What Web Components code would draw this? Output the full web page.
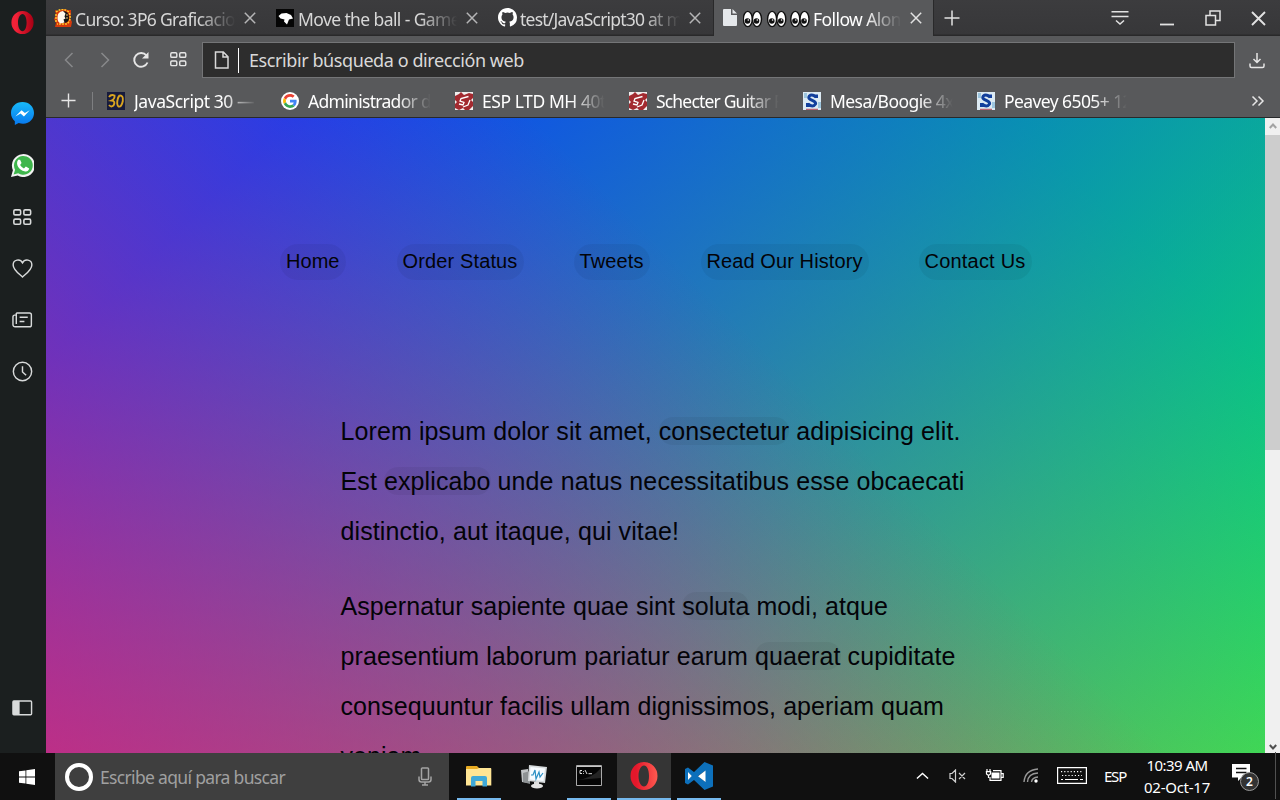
<!DOCTYPE html>
<html lang="es">
<head>
<meta charset="utf-8">
<title>Follow Along Nav</title>
<style>
html,body{margin:0;height:100%;overflow:hidden;background:#101010}
body{font-family:"Noto Sans","Open Sans",sans-serif}
</style>
</head>
<body>
<desk-top></desk-top>
<script>
const define = (name, html, setup) => customElements.define(name, class extends HTMLElement {
  connectedCallback() {
    if (this.shadowRoot) return;
    this.attachShadow({ mode: 'open' }).innerHTML = typeof html === 'function' ? html(this) : html;
    if (setup) setup(this);
  }
});

/* Text whose tracking is adjusted so that it fills the given width. */
define('fit-text', h => `<style>:host{display:inline-block;white-space:nowrap;width:${h.getAttribute('w')}px}span{display:inline-block;white-space:pre}</style><span><slot></slot></span>`, h => {
  const s = h.shadowRoot.querySelector('span');
  const d = +h.getAttribute('w') - s.getBoundingClientRect().width;
  s.style.letterSpacing = (d / h.textContent.length).toFixed(4) + 'px';
});

const O = 'fill="none" stroke="currentColor" stroke-width="1.5"';
const opera = (id, a, b) => `<linearGradient id="${id}" x1="0" x2="1"><stop offset=".2" stop-color="${a}"/><stop offset="1" stop-color="${b}"/></linearGradient><path fill="url(#${id})" fill-rule="evenodd" d="M14 0A13.5 14 0 1 0 14 28A13.5 14 0 1 0 14 0ZM14 3.5C17 3.5 19 8 19 14S17 24.500 14 24.500S8.500 20 8.500 14S11 3.500 14 3.500Z"/>`;
const eye = x => `<g transform="translate(${x} 0)"><ellipse cx="4.800" cy="9" rx="4.500" ry="7.600" fill="#fff" stroke="#111" stroke-width="1.400"/><ellipse cx="14" cy="9" rx="4.500" ry="7.600" fill="#fff" stroke="#111" stroke-width="1.400"/><circle cx="4.500" cy="11" r="2.800" fill="#111"/><circle cx="13.500" cy="11" r="2.800" fill="#111"/><circle cx="5.300" cy="10" r=".8" fill="#fff"/><circle cx="14.300" cy="10" r=".8" fill="#fff"/></g>`;
const shop = '<path fill="#f1eeee" d="M0 0h18v18H0z"/><path fill="#a32a30" d="M0 4L4 2L6 0L9 3L14 1L18 2V6L16 8L18 10V14L14 18H10L8 16L4 18L0 16V12L2 10L0 8Z"/><path d="M13.500 4.500L6 6.500L5 9L9 10.500L8 13L4 12M15 8L13 13L8 15" fill="none" stroke="#fff" stroke-width="1.300"/>';
const sweet = '<path fill="#dceaf3" d="M0 0h18v18H0z"/><path d="M1 1h3v5H1zM15 10h3v6h-3z" fill="#9cc5de"/><path d="M13.500 2.500V6M13 5Q9 1.500 6.300 4C3.500 8.500 14 8 12.500 12Q10 16 5 12M4.500 11v4" fill="none" stroke="#123f9c" stroke-width="3"/><path d="M3 17.300h12" stroke="#b34452"/>';
const icons = {
  opera: [28, 28, opera('o1', '#f32238', '#a70014')],
  operaBig: [28, 28, opera('o2', '#e3172b', '#ff5a50')],
  messenger: [24, 24, '<linearGradient id="m" x2="0" y2="1"><stop stop-color="#18b9f8"/><stop offset="1" stop-color="#0878f0"/></linearGradient><path fill="url(#m)" d="M12 0C5 0 0 5 0 11.500C0 15 1.500 18 4 20v4l4-2C18 25 24 18 24 11.500C24 5 19 0 12 0Z"/><path fill="#fff" d="M4.500 15L11 8.500L14.500 11.500L19.500 8.500L13.500 15L10 12Z"/>'],
  whatsapp: [24, 24, '<path fill="#f2f2f2" d="M0 24L2 17A12 12 0 1 1 7 22.500Z"/><path fill="#3fb64c" d="M2.700 21.300L4.300 16.500A9.800 9.800 0 1 1 7.500 20Z"/><path fill="#fff" d="M7.500 6L9.500 6L11 9.500L9.500 11.500Q11 14 13.500 15L15.500 13L19 15Q18 19 14 18C9 17 4 11 7.500 6Z"/>'],
  speed: [18, 16, `<g ${O}><rect x=".8" y=".8" width="6.400" height="4.800" rx="1.200"/><rect x="10.300" y=".8" width="6.400" height="4.800" rx="1.200"/><rect x=".8" y="9.600" width="6.400" height="4.800" rx="1.200"/><rect x="10.300" y="9.600" width="6.400" height="4.800" rx="1.200"/></g>`],
  heart: [22, 20, `<path ${O} d="M11 18.800C8 16 1.200 11.500 1.200 6.200C1.200 .5 8.500-.8 11 4C13.500-.8 20.800 .5 20.800 6.200C20.800 11.500 14 16 11 18.800Z"/>`],
  news: [22, 17, `<path ${O} d="M4.500 1h13.800a2 2 0 0 1 2 2v10.500a2 2 0 0 1-2 2H3.300A2.200 2.200 0 0 1 1 13.300V5q0-2 3-2M4.500 1v11.500M8 5.500h8.500M8 10h5"/>`],
  clock: [22, 22, `<g ${O}><circle cx="11" cy="11" r="9.600"/><path d="M11 5.500V11.500L14.800 15"/></g>`],
  panel: [22, 17, `<rect ${O} x="1" y="1" width="19.500" height="14.500" rx="1"/><path fill="currentColor" d="M1 1h7v14.500H1z"/>`],
  x: [12, 12, `<path ${O} d="M.8 .8L11.200 11.200M11.200 .8L.8 11.200"/>`],
  plus: [16, 16, `<path ${O} d="M8 .5v15M.5 8h15"/>`],
  menu: [18, 16, `<path ${O} d="M.5 1.800h17M.5 6.500h17M5 10.500l4 3.600l4-3.600"/>`],
  min: [16, 16, '<path stroke="currentColor" stroke-width="1.800" d="M1 14.500h14"/>'],
  restore: [16, 16, `<path ${O} d="M1 5.500h9.500V15H1zM5 5.500V1h10v9.500h-4.500"/>`],
  back: [10, 16, `<path ${O} d="M8.500 1L1.500 8l7 7"/>`],
  fwd: [10, 16, `<path ${O} d="M1.500 1l7 7l-7 7"/>`],
  reload: [18, 18, '<path fill="none" stroke="currentColor" stroke-width="1.900" d="M15.500 11.500A6.900 6.900 0 1 1 14.500 4.500"/><path fill="currentColor" d="M16.500 1v6.500H10Z"/>'],
  doc: [16, 18, `<path ${O} d="M1.500 1h7.800l4.700 4.800V17H1.500zM9 1v5h5"/>`],
  dl: [16, 17, `<path ${O} d="M8 1v9.500M4.500 7L8 10.500L11.500 7M1 11.500v2.500q0 1.500 1.500 1.500h11q1.500 0 1.500-1.500v-2.500"/>`],
  more: [14, 12, `<path ${O} d="M1.500 1.500L6 6l-4.500 4.500M7.500 1.500L12 6l-4.500 4.500"/>`],
  unam: [18, 18, '<path fill="#d63a0c" d="M1 1l3 1L9 0l5 1l3 0v4l-1 4l2 4l-1 5H1l1-4L0 10l2-4Z"/><path stroke="#ffc928" stroke-width="1.500" fill="none" stroke-dasharray="2 1" d="M2 3q6-5 13 0q3 7-2 12H3M2 5v9"/><path fill="#151515" d="M9 2q6 0 6 7q0 5-6 5Z"/><path fill="#fff8ed" d="M9 2Q3 3 3.500 9q0 4 3 5.500l4-1l-1-3l2-1l-1-2l1-3Z"/><path d="M12 6h2M12 9h2" stroke="#e8c070"/>'],
  ball: [18, 18, '<path fill="#050505" d="M0 0h18v18H0z"/><path fill="#fff" d="M2.500 7l3-2.500l5-.5l4.500 2l2 3.500l-4 1l-2 5l-3-3l.5-2l-4-1Z"/>'],
  github: [16, 16, '<path fill="#fff" d="M8 0C3.580 0 0 3.580 0 8c0 3.540 2.290 6.530 5.470 7.590.4.070.55-.17.55-.38 0-.19-.01-.82-.01-1.490-2.010.37-2.530-.49-2.690-.94-.09-.23-.48-.94-.82-1.130-.28-.15-.68-.52-.01-.53.63-.01 1.080.58 1.230.82.72 1.210 1.870.87 2.330.66.070-.52.28-.87.51-1.070-1.780-.2-3.640-.89-3.640-3.950 0-.87.31-1.590.82-2.150-.08-.2-.36-1.020.08-2.120 0 0 .67-.21 2.200.82a7.600 7.600 0 0 1 4 0c1.530-1.040 2.200-.82 2.200-.82.44 1.100.16 1.920.08 2.120.51.56.82 1.270.82 2.150 0 3.070-1.870 3.750-3.650 3.950.29.25.54.73.54 1.480 0 1.070-.01 1.930-.01 2.200 0 .21.15.46.55.38A8 8 0 0 0 16 8c0-4.420-3.580-8-8-8Z"/>'],
  page: [14, 17, '<path fill="#e5e8eb" d="M1 0h7v6h6v10q0 1-1 1H1q-1 0-1-1V1Q0 0 1 0ZM9.500 0L14 4.600H9.500Z"/>'],
  eyes: [68, 18, eye(0) + eye(24.3) + eye(47.5)],
  google: [48, 48, '<circle cx="24" cy="24" r="24" fill="#fff"/><g transform="translate(5.500 5.500) scale(.77)"><path fill="#EA4335" d="M24 9.500c3.540 0 6.710 1.220 9.210 3.600l6.850-6.850C35.900 2.380 30.470 0 24 0 14.620 0 6.510 5.380 2.560 13.220l7.980 6.190C12.430 13.720 17.740 9.500 24 9.500z"/><path fill="#4285F4" d="M46.980 24.550c0-1.570-.15-3.090-.38-4.550H24v9.020h12.940c-.58 2.960-2.260 5.480-4.780 7.180l7.730 6c4.510-4.180 7.090-10.360 7.090-17.650z"/><path fill="#FBBC05" d="M10.530 28.590c-.48-1.450-.76-2.990-.76-4.590s.27-3.140.76-4.590l-7.980-6.190C.92 16.460 0 20.120 0 24c0 3.880.92 7.540 2.560 10.780l7.970-6.190z"/><path fill="#34A853" d="M24 48c6.480 0 11.930-2.130 15.890-5.810l-7.730-6c-2.150 1.450-4.920 2.300-8.160 2.300-6.260 0-11.570-4.220-13.470-9.910l-7.980 6.190C6.510 42.620 14.620 48 24 48z"/></g>'],
  shop: [18, 18, shop], sweet: [18, 18, sweet],
  js30: [18, 18, '<path fill="#171b3c" d="M0 0h18v18H0z"/><path fill="none" stroke="#d9a520" stroke-width="1.900" d="M2 5Q4 2 7.500 3.500Q8 7 4.500 8.500Q9 9 6.500 13.500Q4 15.500 2 13M12.500 3.500Q16.500 3 15.800 9Q14.500 15.500 11.500 14.500Q9.500 13 10.500 8Q11 5 12.500 3.500"/>'],
  win: [16, 16, '<path fill="#fff" d="M0 2.300L6.500 1.400V7.500H0ZM7.300 1.300L16 0V7.500H7.300ZM0 8.400H6.500V14.600L0 13.700ZM7.300 8.400H16V16L7.300 14.700Z"/>'],
  mic: [14, 19, '<g fill="none" stroke="#a4a4a4" stroke-width="1.500"><rect x="3.500" y="1" width="7" height="11.500" rx=".8"/><path d="M1 9.500v3q0 2.500 2.500 2.500h7q2.500 0 2.500-2.500v-3M7 15v3M4 18h6"/></g>'],
  folder: [26, 22, '<path fill="#e8ab22" d="M0 2q0-1 1-1h10l2 2h12v5H0Z"/><path fill="#ffe594" d="M0 4h11l2-1h11.500q.8 0 .8 1v16.500H0Z"/><path fill="#3fa9d8" d="M5 21V13q0-2 2-2h12q2 0 2 2v8.500h-4.500V16h-7v5.500H5Z"/>'],
  monitor: [28, 26, '<path fill="#c1c4c6" d="M1 7l7-1v14l-6-1Z"/><path fill="#8e9294" d="M3 10l7-2v13l-7-2Z"/><path fill="#d7dbdd" d="M9 2L27 4L25 20L8 18Z"/><path fill="#f7fbff" d="M10.500 4L25 5.500L23.500 18L9.500 16.500Z"/><path d="M11 12h2l2-5l1 9l3-7l1 5l3-4" fill="none" stroke="#2a8fc4" stroke-width="1.200"/><path fill="#ddd" d="M14 19h5v3h-5z"/><ellipse cx="17" cy="23" rx="6" ry="2.400" fill="#e5e5e5"/>'],
  cmd: [26, 21, '<path fill="#050505" stroke="#aaa" d="M.5 .5h25v20H.5z"/><path fill="#c8c8c8" d="M1 1h24v1H1z"/><path fill="#242424" d="M1 15Q17 13 25 3v10Z"/><path d="M6 5.500H4v3h2M7.500 6v.8M7.500 8v.8M9 5l2 4M12.500 8.700H16" fill="none" stroke="#ddd"/>'],
  code: [28, 28, '<path fill="#0d70bb" d="M19.500 0L28 3.500V24.500L19.500 28L9 18L3 22.500L0 21V7L3 5.500L9 10ZM20 9L13 14L20 19.500ZM3 10.500V17.500L6.500 14Z"/><path fill="#fff" d="M20.500 8.500V20L13 14.200ZM3 10V18L6.800 14Z"/>'],
  up: [14, 8, `<path ${O} d="M1 7l6-5.500L13 7"/>`],
  mute: [18, 14, '<g fill="none" stroke="#cfcfcf" stroke-width="1.200"><path d="M1 4.500h2l3.500-3.500v12L3 9.500H1ZM10 4l6 6M16 4l-6 6"/></g>'],
  battery: [19, 13, '<path fill="#fff" d="M6.500 3.500h8v6h-8z"/><path fill="none" stroke="#fff" stroke-width="1.200" d="M8 1.600h8v9.800H5V8M16.500 4.600h1.700v3.800h-1.700M2 0v2M5 0v2M.8 2.600h5.500M1.500 3v2L3.500 6.500L5.500 5V3M3.500 6v3"/>'],
  wifi: [16, 15, '<g fill="none" stroke="#999" stroke-width="1.400"><path d="M1 14Q2 2 15 1M4.500 14Q5 5.500 15 5M8.500 14Q9 9.500 15 9"/></g><circle cx="13" cy="13" r="1.700" fill="#fff"/>'],
  keyboard: [30, 17, '<path fill="none" stroke="#fff" stroke-width="1.200" d="M.6 .6h28.800v15.800H.6z"/><path fill="none" stroke="#fff" stroke-width="1.200" stroke-dasharray="1.200 2" d="M4 4.700h22M5 8.500h20"/><path stroke="#fff" stroke-width="1.200" d="M4 12.500h2M8 12.500h13M23 12.500h3"/>'],
  note: [18, 17, '<path fill="#fff" d="M0 0h18v13.500H9.500L6 17V13.500H0Z"/><path d="M4 4.500h10.500M4 8.500h10.500" stroke="#111" stroke-width="1.400"/>'],
  sup: [8, 6, '<path fill="none" stroke="#a3a3a3" stroke-width="2" d="M.8 5L4 1.500L7.200 5"/>'],
  sdown: [8, 6, '<path fill="none" stroke="#505050" stroke-width="2" d="M.8 1L4 4.500L7.200 1"/>']
};
define('ui-icon', h => {
  const [vw, vh, body] = icons[h.getAttribute('n')];
  const w = h.getAttribute('w') || vw;
  return `<style>:host{display:block;flex:none;width:${w}px;height:${w * vh / vw}px}svg{display:block}</style><svg width="${w}" height="${w * vh / vw}" viewBox="0 0 ${vw} ${vh}">${body}</svg>`;
});

define('side-rail', `<style>
:host{display:flex;flex-direction:column;align-items:center;box-sizing:border-box;background:#1b1f1f;color:#d8dada;padding:11px 1px 37px 0}
ui-icon{margin-bottom:var(--g)}.end{margin-top:auto}
</style>
<ui-icon n="opera" w="23" style="--g:68px"></ui-icon>
<ui-icon n="messenger" w="23" style="--g:29px"></ui-icon>
<ui-icon n="whatsapp" w="23" style="--g:32px"></ui-icon>
<ui-icon n="speed" w="19" style="--g:33px"></ui-icon>
<ui-icon n="heart" w="21" style="--g:34px"></ui-icon>
<ui-icon n="news" w="21" style="--g:33px"></ui-icon>
<ui-icon n="clock" w="21"></ui-icon>
<ui-icon class="end" n="panel" w="21"></ui-icon>`);

define('tab-item', `<style>
:host{display:flex;align-items:center;box-sizing:border-box;height:35px;padding:0 0 0 9px;color:#d7d7d7;font-size:17.500px;border-right:1px solid transparent}
.t{flex:none;width:162px;margin-left:3px;overflow:hidden;display:flex;align-items:center;line-height:26px;padding-top:2px;-webkit-mask:linear-gradient(90deg,#000 76%,transparent 99%)}
.sep{width:1px;height:18px;background:#5d5d60;margin-left:11px}
.x{margin-left:7px;color:#b5b5b6}
:host([active]){background:#58595b;color:#fff;height:36px;border-left:1px solid #29292a;border-right-color:#29292a}
:host([active]) .sep{display:none}:host([active]) .x{color:#e2e2e2}
:host([active]) .t{margin-left:6px;width:160px}
:host([last]) .sep{display:none}
</style><slot name="icon"></slot><div class="t"><slot></slot></div><ui-icon class="x" n="x" w="12"></ui-icon><div class="sep"></div>`);

define('tab-strip', `<style>
:host{display:flex;height:36px;background:linear-gradient(#3c3c3e,#373739 34px,#29292a 35px)}
tab-item{flex:none;width:222px}
.win{margin-left:auto;display:flex;align-items:center;gap:30px;padding-right:14px;color:#e2e2e2}
.new{margin:10px 0 0 10px;color:#e2e2e2}
</style>
<tab-item style="padding-left:8px;width:221px;margin-right:1px"><ui-icon slot="icon" n="unam" w="18"></ui-icon><fit-text w="160">Curso: 3P6 Graficacio</fit-text></tab-item>
<tab-item style="padding-left:8px"><ui-icon slot="icon" n="ball" w="18"></ui-icon><fit-text w="162" style="margin-left:1px">Move the ball - Game</fit-text></tab-item>
<tab-item last style="width:222px;padding-left:8px"><ui-icon slot="icon" n="github" w="19"></ui-icon><fit-text w="162">test/JavaScript30 at m</fit-text></tab-item>
<tab-item active style="width:221px;margin-left:1px"><ui-icon slot="icon" n="page" w="14" style="margin-top:-2px"></ui-icon><ui-icon n="eyes" w="68" style="margin-right:2px"></ui-icon><fit-text w="88">Follow Alon</fit-text></tab-item>
<ui-icon class="new" n="plus"></ui-icon>
<div class="win"><ui-icon n="menu" w="18"></ui-icon><ui-icon n="min"></ui-icon><ui-icon n="restore"></ui-icon><ui-icon n="x" w="15"></ui-icon></div>`);

define('address-bar', `<style>
:host{display:flex;align-items:center;height:48px;color:#e6e6e6}
.nav{display:flex;align-items:center;width:156px;box-sizing:border-box;padding-left:18px}
.dim{color:#88898b}
.box{flex:none;box-sizing:border-box;width:1033px;height:36px;border:1px solid #747577;background:#2d2d2d;display:flex;align-items:center;padding-left:11px;font-size:18px;color:#d9d9d9}
.box fit-text{margin-top:-1px}
.caret{width:1px;height:25px;background:#fff;margin:0 10px 0 8px}
</style>
<div class="nav"><ui-icon class="dim" n="back"></ui-icon><ui-icon class="dim" n="fwd" style="margin-left:26px"></ui-icon><ui-icon n="reload" style="margin-left:22px"></ui-icon><ui-icon n="speed" w="17" style="margin-left:20px"></ui-icon></div>
<div class="box"><ui-icon n="doc" w="16"></ui-icon><div class="caret"></div><fit-text w="275">Escribir búsqueda o dirección web</fit-text></div>
<ui-icon n="dl" style="margin-left:14px"></ui-icon>`);

define('bookmark-item', `<style>
:host{display:flex;align-items:center;flex:none;width:174px;font-size:17.500px;color:#fff}
.t{width:124px;margin-left:9px;overflow:hidden;-webkit-mask:linear-gradient(90deg,#000 72%,transparent 99%);line-height:26px}
</style><slot name="icon"></slot><div class="t"><slot></slot></div>`);

define('bookmark-bar', `<style>
:host{display:flex;align-items:center;height:33px;box-sizing:border-box;border-bottom:1px solid #28292b;color:#e6e6e6;padding:0 15px 0 15px}
.sep{width:1px;height:18px;background:#7e7f81;margin:0 14px 0 16px}
.more{margin-left:auto}
</style>
<ui-icon n="plus" w="15"></ui-icon><div class="sep"></div>
<bookmark-item><ui-icon slot="icon" n="js30"></ui-icon><fit-text w="120">JavaScript 30 —</fit-text></bookmark-item>
<bookmark-item><ui-icon slot="icon" n="google" w="18"></ui-icon><fit-text w="123">Administrador d</fit-text></bookmark-item>
<bookmark-item><ui-icon slot="icon" n="shop"></ui-icon><fit-text w="124">ESP LTD MH 40t</fit-text></bookmark-item>
<bookmark-item><ui-icon slot="icon" n="shop"></ui-icon><fit-text w="128">Schecter Guitar R</fit-text></bookmark-item>
<bookmark-item><ui-icon slot="icon" n="sweet"></ui-icon><fit-text w="124">Mesa/Boogie 4x</fit-text></bookmark-item>
<bookmark-item><ui-icon slot="icon" n="sweet"></ui-icon><fit-text w="128">Peavey 6505+ 12</fit-text></bookmark-item>
<ui-icon class="more" n="more" w="14"></ui-icon>`);

define('word-link', `<style>:host{display:inline}span{background:rgba(0,0,0,.05);border-radius:25px}</style><span><slot></slot></span>`);

define('nav-pill', `<style>:host{display:block;box-sizing:border-box;height:36px;line-height:35px;padding:0 6px;border-radius:25px;background:rgba(0,0,0,.05)}</style><slot></slot>`);

define('page-view', `<style>
:host{display:flex;min-height:0;overflow:hidden}
.view{flex:1;overflow:hidden}
.doc{height:1215px;color:#030308;font-family:"Liberation Sans",Arial,sans-serif;background:
linear-gradient(45deg,hsla(340,100%,55%,1) 0%,hsla(340,100%,55%,0) 70%),
linear-gradient(135deg,hsla(225,95%,50%,1) 10%,hsla(225,95%,50%,0) 80%),
linear-gradient(225deg,hsla(140,90%,50%,1) 10%,hsla(140,90%,50%,0) 80%),hsl(35,95%,55%)}
nav{display:flex;padding:126px 0 0 234px;font-size:20px;gap:50px}
nav fit-text{vertical-align:top}
main{padding:126px 0 0 294.500px;font-size:25px;line-height:50px}
p{margin:0 0 25px}p fit-text{display:block}
.bar{width:15px;background:#f0f0f0;display:flex;flex-direction:column;align-items:center}
.bar ui-icon{padding:5px 0 6px}
.thumb{width:15px;height:315px;background:#cdcdcd}
.bar .dn{margin-top:auto;padding:5px 0 3px}
</style>
<div class="view"><div class="doc">
<nav><nav-pill><fit-text w="53.500">Home</fit-text></nav-pill><nav-pill style="margin-left:1px"><fit-text w="115">Order Status</fit-text></nav-pill><nav-pill><fit-text w="64">Tweets</fit-text></nav-pill><nav-pill style="margin-left:1px"><fit-text w="156">Read Our History</fit-text></nav-pill><nav-pill><fit-text w="101">Contact Us</fit-text></nav-pill></nav>
<main>
<p><fit-text w="620">Lorem ipsum dolor sit amet, <word-link>consectetur</word-link> adipisicing elit.</fit-text>
<fit-text w="624">Est <word-link>explicabo</word-link> unde natus necessitatibus esse obcaecati</fit-text>
<fit-text w="338.500">distinctio, aut itaque, qui vitae!</fit-text></p>
<p><fit-text w="547.500">Aspernatur sapiente quae sint <word-link>soluta</word-link> modi, atque</fit-text>
<fit-text w="615">praesentium laborum pariatur earum <word-link>quaerat</word-link> cupiditate</fit-text>
<fit-text w="603.500">consequuntur facilis ullam dignissimos, aperiam quam</fit-text>
<fit-text w="88">veniam.</fit-text></p>
</main></div></div>
<div class="bar"><ui-icon n="sup" w="8"></ui-icon><div class="thumb"></div><ui-icon class="dn" n="sdown" w="8"></ui-icon></div>`);

define('task-button', `<style>:host{display:flex;align-items:center;justify-content:center;box-sizing:border-box;flex:none;width:44px;height:47px;border-bottom:2px solid transparent}
:host([open]){border-color:#76b9ed}:host([active]){background:#353535;width:54px}</style><slot></slot>`);

define('task-bar', `<style>
:host{display:flex;align-items:center;background:#101010;color:#fff;font-size:15px}
.start{width:54px;padding-right:1px;display:flex;justify-content:center}
.search{display:flex;align-items:center;box-sizing:border-box;width:394px;height:47px;background:#3f3f3f;color:#a0a0a0;font-size:17.500px;padding:0 17px 0 10px}
.ring{box-sizing:border-box;width:28px;height:28px;border:4px solid #fff;border-radius:50%;margin-right:7px}
.mic{margin-left:auto}
.apps{display:flex;padding-left:8px}
.tray{margin-left:auto;display:flex;align-items:center;margin-top:-2px}
.clock{display:flex;flex-direction:column;align-items:center;line-height:22px;width:66px;margin:0 22px 0 18px;font-size:15px}
.note{position:relative;width:28px;height:30px;margin-right:15px;padding-top:3px;box-sizing:border-box}
.badge{position:absolute;left:8px;top:11px;width:17px;height:17px;border:1px solid #999;border-radius:50%;background:#333;font-size:12px;font-weight:600;line-height:17px;text-align:center}
.peek{width:1px;height:47px;background:#515151;margin-right:4px;align-self:flex-end}
</style>
<div class="start"><ui-icon n="win"></ui-icon></div>
<div class="search"><div class="ring"></div><fit-text w="185">Escribe aquí para buscar</fit-text><ui-icon class="mic" n="mic"></ui-icon></div>
<div class="apps">
<task-button open><ui-icon n="folder"></ui-icon></task-button>
<task-button style="width:66px"><ui-icon n="monitor"></ui-icon></task-button>
<task-button open><ui-icon n="cmd"></ui-icon></task-button>
<task-button open active style="margin:0 6px"><ui-icon n="operaBig"></ui-icon></task-button>
<task-button open><ui-icon n="code"></ui-icon></task-button></div>
<div class="tray"><ui-icon n="up" w="13"></ui-icon><ui-icon n="mute" style="margin-left:20px"></ui-icon><ui-icon n="battery" style="margin-left:18px"></ui-icon><ui-icon n="wifi" style="margin-left:19px"></ui-icon><ui-icon n="keyboard" style="margin:0 17px 0 18px"></ui-icon><fit-text w="22">ESP</fit-text>
<div class="clock"><fit-text w="61">10:39 AM</fit-text><fit-text w="66">02-Oct-17</fit-text></div>
<div class="note"><ui-icon n="note"></ui-icon><div class="badge">2</div></div><div class="peek"></div></div>`);

define('desk-top', `<style>
:host{display:grid;width:1280px;height:800px;grid-template:753px 47px / 46px 1234px}
.browser{display:grid;grid-template-rows:36px 48px 34px 635px;background:#58595b;min-width:0}
task-bar{grid-column:1 / 3}
bookmark-bar{height:34px}
</style><side-rail></side-rail>
<div class="browser"><tab-strip></tab-strip><address-bar></address-bar><bookmark-bar></bookmark-bar><page-view></page-view></div>
<task-bar></task-bar>`);
</script>
</body>
</html>
